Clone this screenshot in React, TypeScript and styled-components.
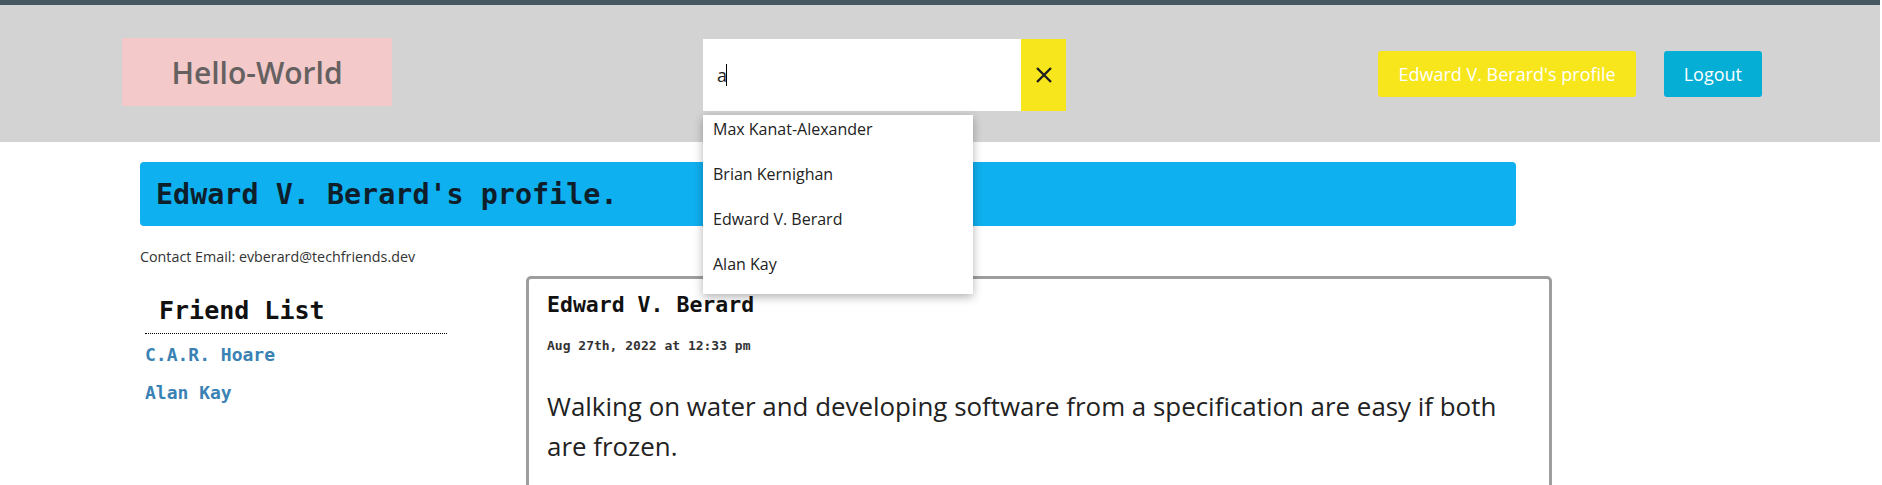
import React from "react";
import styled, { createGlobalStyle } from "styled-components";

const GlobalStyle = createGlobalStyle`
  html, body {
    margin: 0;
    padding: 0;
    overflow: hidden;
    background: #ffffff;
    font-family: "Open Sans", "Noto Sans", sans-serif;
  }
  * { box-sizing: border-box; }
`;

const Page = styled.div`
  width: 1880px;
  min-height: 485px;
`;

const Header = styled.header`
  height: 142px;
  background: #d3d3d3;
  border-top: 5px solid #465862;
  display: flex;
  align-items: center;
  padding: 0 118px 0 122px;
`;

const Logo = styled.div`
  width: 270px;
  height: 68px;
  background: #f4c9ca;
  display: flex;
  align-items: center;
  justify-content: center;
  font-family: "Open Sans", sans-serif;
  font-weight: 600;
  font-size: 30px;
  color: #666161;
  margin-top: -3px;
`;

const SearchWrap = styled.div`
  position: relative;
  display: flex;
  margin-left: 311px;
  margin-top: 2px;
`;

const SearchInput = styled.input`
  width: 318px;
  height: 72px;
  border: none;
  outline: none;
  background: #ffffff;
  padding: 0 0 0 14px;
  font-family: "Open Sans", sans-serif;
  font-size: 18px;
  color: #222;
  caret-color: transparent;
`;

const Caret = styled.span`
  position: absolute;
  left: 23px;
  top: 25px;
  width: 1px;
  height: 22px;
  background: #000;
  pointer-events: none;
`;

const ClearButton = styled.button`
  width: 45px;
  height: 72px;
  border: none;
  background: #f8e61d;
  display: flex;
  align-items: center;
  justify-content: center;
  padding: 0;
  cursor: pointer;
`;

const Dropdown = styled.div`
  position: absolute;
  top: 76px;
  left: 0;
  width: 270px;
  height: 179px;
  background: #ffffff;
  overflow: hidden;
  box-shadow: 0 3px 9px rgba(0, 0, 0, 0.3);
  z-index: 10;
`;

const DropList = styled.ul`
  list-style: none;
  margin: -8px 0 0 0;
  padding: 0;
`;

const DropItem = styled.li`
  height: 45px;
  display: flex;
  align-items: center;
  padding-left: 10px;
  font-size: 16px;
  color: #222;
`;

const Actions = styled.div`
  margin-left: auto;
  display: flex;
  align-items: center;
  gap: 28px;
`;

const ActionButton = styled.button<{ $bg: string }>`
  height: 46px;
  padding: 0 20px;
  border: none;
  border-radius: 3px;
  background: ${(p) => p.$bg};
  color: #ffffff;
  font-family: "Open Sans", sans-serif;
  font-size: 18px;
  cursor: pointer;
`;

const Main = styled.main`
  padding-left: 140px;
  padding-top: 20px;
`;

const Banner = styled.div`
  width: 1376px;
  height: 64px;
  background: #0fb0ef;
  border-radius: 4px;
  display: flex;
  align-items: center;
  padding-left: 16px;
  font-family: "DejaVu Sans Mono", monospace;
  font-weight: bold;
  font-size: 28.4px;
  color: #0e1e2b;
`;

const Contact = styled.p`
  margin: 22px 0 0 0;
  font-size: 14.3px;
  line-height: 18px;
  color: #333;
`;

const Row = styled.div`
  display: flex;
  align-items: flex-start;
  margin-top: 10px;
`;

const Sidebar = styled.aside`
  width: 302px;
  margin-left: 5px;
  font-family: "DejaVu Sans Mono", monospace;
`;

const SideTitle = styled.h2`
  margin: 20px 0 0 0;
  padding: 0 0 8px 14px;
  font-size: 25px;
  font-weight: bold;
  line-height: 29px;
  color: #111;
  border-bottom: 1px dotted #000;
`;

const FriendLink = styled.a`
  display: block;
  height: 38px;
  line-height: 38px;
  font-size: 18px;
  font-weight: bold;
  color: #3a82b4;
  text-decoration: none;
  &:first-of-type { margin-top: 2px; }
`;

const PostCard = styled.article`
  width: 1026px;
  margin-left: 79px;
  border: 3px solid #9e9e9e;
  border-radius: 5px;
  padding: 13px 18px 80px 18px;
`;

const PostAuthor = styled.h3`
  margin: 0;
  font-family: "DejaVu Sans Mono", monospace;
  font-weight: bold;
  font-size: 21.5px;
  line-height: 25px;
  color: #111;
`;

const PostDate = styled.div`
  margin-top: 21px;
  font-family: "DejaVu Sans Mono", monospace;
  font-weight: 600;
  font-size: 13px;
  line-height: 15px;
  color: #333;
`;

const PostBody = styled.p`
  margin: 33px 0 0 0;
  font-size: 25.9px;
  line-height: 40px;
  color: #222;
`;

const CloseIcon = () => (
  <svg width="20" height="20" viewBox="0 0 20 20" aria-hidden="true">
    <path d="M3 3 L17 17 M17 3 L3 17" stroke="#1f1f1f" strokeWidth="2.4" fill="none" />
  </svg>
);

const results = ["Max Kanat-Alexander", "Brian Kernighan", "Edward V. Berard", "Alan Kay"];
const friends = ["C.A.R. Hoare", "Alan Kay"];

export default function App() {
  return (
    <Page>
      <GlobalStyle />
      <Header>
        <Logo>Hello-World</Logo>
        <SearchWrap>
          <SearchInput defaultValue="a" />
          <Caret />
          <ClearButton aria-label="Clear search">
            <CloseIcon />
          </ClearButton>
          <Dropdown>
            <DropList>
              {results.map((r) => (
                <DropItem key={r}>{r}</DropItem>
              ))}
            </DropList>
          </Dropdown>
        </SearchWrap>
        <Actions>
          <ActionButton $bg="#f8e61d">Edward V. Berard's profile</ActionButton>
          <ActionButton $bg="#05aed5">Logout</ActionButton>
        </Actions>
      </Header>
      <Main>
        <Banner>Edward V. Berard's profile.</Banner>
        <Contact>Contact Email: evberard@techfriends.dev</Contact>
        <Row>
          <Sidebar>
            <SideTitle>Friend List</SideTitle>
            {friends.map((f) => (
              <FriendLink key={f} href="#">
                {f}
              </FriendLink>
            ))}
          </Sidebar>
          <PostCard>
            <PostAuthor>Edward V. Berard</PostAuthor>
            <PostDate>Aug 27th, 2022 at 12:33 pm</PostDate>
            <PostBody>
              Walking on water and developing software from a specification are easy if both are frozen.
            </PostBody>
          </PostCard>
        </Row>
      </Main>
    </Page>
  );
}
